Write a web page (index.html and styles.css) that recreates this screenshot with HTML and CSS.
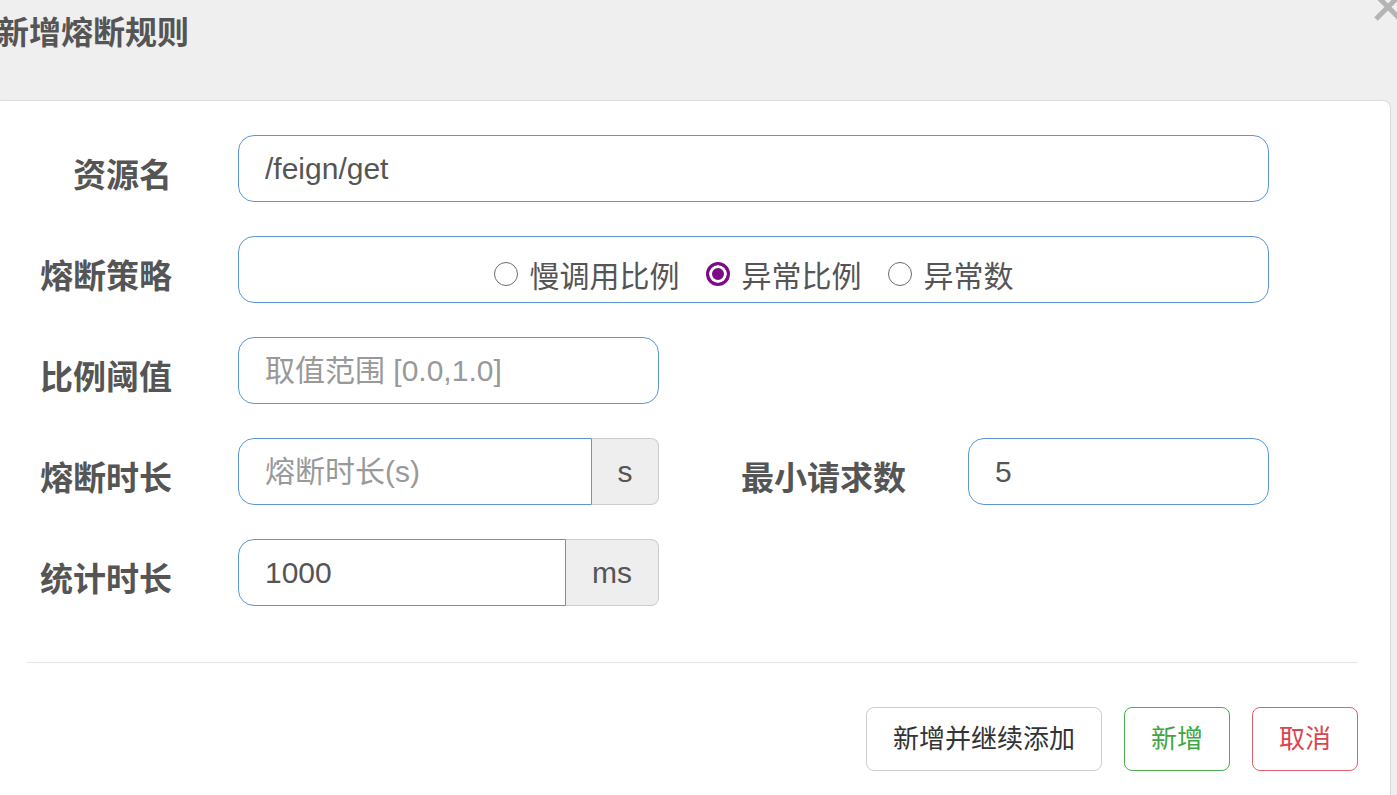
FILE: index.html
```html
<!DOCTYPE html>
<html lang="zh-CN">
<head>
<meta charset="utf-8">
<title>新增熔断规则</title>
<link rel="stylesheet" href="styles.css">
</head>
<body>
<div class="header">
  <h4 class="title">新增熔断规则</h4>
  <svg class="close" width="30" height="30" viewBox="0 0 30 30" aria-label="关闭">
    <path d="M3 3 L27 27 M27 3 L3 27" stroke="#b4b4b4" stroke-width="5" stroke-linecap="butt" fill="none"/>
  </svg>
</div>
<div class="panel">
  <div class="row">
    <label class="label">资源名</label>
    <input class="input w-full" type="text" value="/feign/get">
  </div>
  <div class="row">
    <label class="label">熔断策略</label>
    <div class="radios w-full">
      <span class="opt"><span class="radio"></span><span>慢调用比例</span></span>
      <span class="opt"><span class="radio checked"></span><span>异常比例</span></span>
      <span class="opt"><span class="radio"></span><span>异常数</span></span>
    </div>
  </div>
  <div class="row">
    <label class="label">比例阈值</label>
    <input class="input w-sm" type="text" placeholder="取值范围 [0.0,1.0]">
  </div>
  <div class="row">
    <label class="label">熔断时长</label>
    <div class="group">
      <input class="input" type="text" placeholder="熔断时长(s)">
      <span class="addon addon-s">s</span>
    </div>
    <label class="label label-inline">最小请求数</label>
    <input class="input w-min" type="text" value="5">
  </div>
  <div class="row last">
    <label class="label">统计时长</label>
    <div class="group">
      <input class="input" type="text" value="1000">
      <span class="addon addon-ms">ms</span>
    </div>
  </div>
  <div class="divider"></div>
  <div class="footer">
    <button class="btn btn-default" type="button">新增并继续添加</button>
    <button class="btn btn-green" type="button">新增</button>
    <button class="btn btn-red" type="button">取消</button>
  </div>
</div>
</body>
</html>
```
FILE: styles.css
```css
html, body {
  margin: 0;
  padding: 0;
}
body {
  background: #efefef;
  font-family: "Liberation Sans", "Noto Sans CJK SC", sans-serif;
  color: #555;
  height: 795px;
  overflow: hidden;
}
.header {
  height: 100px;
  position: relative;
}
.title {
  margin: 0 0 0 -3px;
  padding-top: 14px;
  font-size: 32px;
  line-height: 32px;
  font-weight: bold;
  color: #555;
  font-family: "Noto Sans CJK SC", sans-serif;
}
.close {
  position: absolute;
  right: -6px;
  top: -8px;
}
.panel {
  margin-left: -6px;
  width: 1397px;
  height: 695px;
  box-sizing: border-box;
  background: #fff;
  border: 1px solid #dcdcdc;
  border-bottom: 0;
  border-radius: 8px 8px 0 0;
  padding-top: 34px;
}
.row {
  display: flex;
  align-items: center;
  height: 67px;
  margin-bottom: 34px;
}
.row.last {
  margin-bottom: 0;
}
.label {
  width: 177px;
  margin-right: 66px;
  flex: none;
  text-align: right;
  font-family: "Noto Sans CJK SC", sans-serif;
  font-size: 33px;
  line-height: 40px;
  font-weight: bold;
  color: #555;
  padding-top: 8px;
  white-space: nowrap;
}
.label-inline {
  width: auto;
  margin-left: 82px;
  margin-right: 62px;
}
.input {
  box-sizing: border-box;
  height: 67px;
  border: 1.5px solid #5b97d5;
  border-radius: 16px;
  padding: 0 26px;
  font-family: "Liberation Sans", "Noto Sans CJK SC", sans-serif;
  font-size: 30px;
  color: #555;
  background: #fff;
  outline: none;
  margin: 0;
}
.input::placeholder {
  color: #999;
}
.w-full {
  width: 1031px;
}
.w-sm {
  width: 421px;
}
.w-min {
  width: 301px;
}
.radios {
  box-sizing: border-box;
  height: 67px;
  border: 1.5px solid #5b97d5;
  border-radius: 16px;
  display: flex;
  justify-content: center;
  align-items: center;
  gap: 26px;
  padding-top: 8px;
  font-family: "Noto Sans CJK SC", sans-serif;
  font-size: 30px;
  color: #555;
}
.opt {
  display: flex;
  align-items: center;
  gap: 12px;
}
.radio {
  box-sizing: border-box;
  width: 24px;
  height: 24px;
  border-radius: 50%;
  border: 1.5px solid #6a6a6a;
  background: #fff;
}
.radio.checked {
  border: 3px solid #7b0a87;
  background: #7b0a87;
  box-shadow: inset 0 0 0 3px #fff;
}
.group {
  display: flex;
  width: 421px;
  height: 67px;
  flex: none;
}
.group .input {
  flex: 1;
  min-width: 0;
  width: auto;
  border-radius: 16px 0 0 16px;
}
.addon {
  box-sizing: border-box;
  height: 67px;
  flex: none;
  border: 1px solid #ccc;
  border-left: 0;
  border-radius: 0 8px 8px 0;
  background: #eee;
  display: flex;
  align-items: center;
  justify-content: center;
  font-size: 30px;
  color: #555;
}
.addon-s {
  width: 67px;
}
.addon-ms {
  width: 93px;
}
.divider {
  height: 1px;
  background: #e5e5e5;
  margin: 56px 32px 0;
}
.footer {
  display: flex;
  justify-content: flex-end;
  gap: 22px;
  padding: 44px 32px 0;
}
.btn {
  box-sizing: border-box;
  height: 64px;
  padding: 0 26px 5px;
  border: 1px solid #ccc;
  border-radius: 8px;
  background: #fff;
  font-family: "Noto Sans CJK SC", sans-serif;
  font-size: 26px;
  color: #333;
  cursor: pointer;
}
.btn-green {
  border-color: #4cb050;
  color: #3fa645;
}
.btn-red {
  border-color: #e4606c;
  color: #dc4550;
}
```
